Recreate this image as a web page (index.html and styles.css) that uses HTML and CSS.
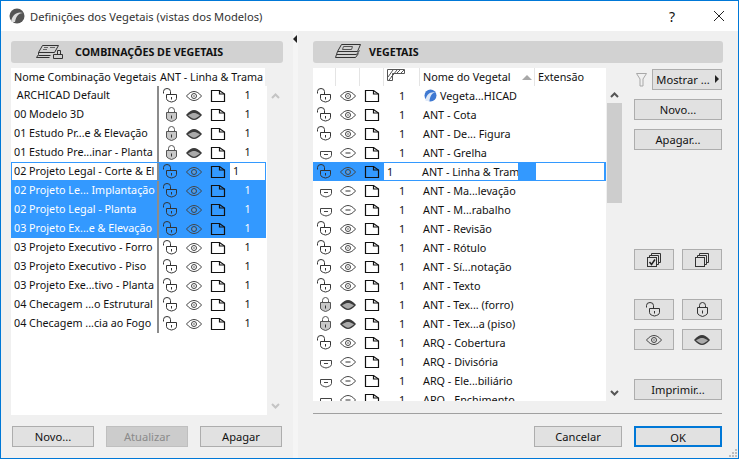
FILE: index.html
```html
<!DOCTYPE html>
<html lang="pt">
<head>
    <meta charset="UTF-8">
    <title>Definições dos Vegetais</title>
    <link rel="stylesheet" href="styles.css">
</head>
<body>
<svg class="defs" width="0" height="0">
    <symbol id="i-unlock" viewBox="0 0 16 16">
        <path d="M.5 5.500V3.500a3.500 3 0 0 1 7 0V6.500" fill="none" stroke="#333"/>
        <path d="M3.500 6.500h10v4c0 2-2.500 3-5 3.500-2.500-.5-5-1.500-5-3.500z" fill="none" stroke="#333"/>
        <path d="M8.500 9v2.500" stroke="#333"/>
    </symbol>
    <symbol id="i-lock" viewBox="0 0 16 16">
        <path d="M5.500 6V3.500a3 3 0 0 1 6 0V6" fill="none" stroke="#555"/>
        <path d="M3.500 5.500h10v5.500c0 1.800-3 2.800-5 3.500-2-.7-5-1.700-5-3.500z" fill="#c8c8c8" stroke="#555"/>
        <path d="M8.500 8.500v3" stroke="#333"/>
    </symbol>
    <symbol id="i-lock-line" viewBox="0 0 16 16">
        <path d="M5.500 6V3.500a3 3 0 0 1 6 0V6" fill="none" stroke="#333"/>
        <path d="M3.500 5.500h10v5.500c0 1.800-3 2.800-5 3.500-2-.7-5-1.700-5-3.500z" fill="none" stroke="#333"/>
        <path d="M8.500 8.500v3" stroke="#333"/>
    </symbol>
    <symbol id="i-half" viewBox="0 0 16 16">
        <path d="M3.500 6.500h11v4c0 2-3.500 3-5.500 3.500-2-.5-5.500-1.500-5.500-3.500z" fill="none" stroke="#444"/>
        <path d="M7 9.500h4" stroke="#444"/>
    </symbol>
    <symbol id="i-eye" viewBox="0 0 16 16">
        <path d="M.5 8C3 5 5.500 3.500 8 3.500s5 1.500 7.500 4.500C13 11 10.500 12.500 8 12.500S3 11 .5 8z" fill="none" stroke="#444"/>
        <circle cx="8" cy="8" r="2.500" fill="none" stroke="#444"/>
        <circle cx="8" cy="8" r="1" fill="#999"/>
    </symbol>
    <symbol id="i-eye-off" viewBox="0 0 16 16">
        <path d="M0 8C3 4.500 5.500 3 8 3s5 1.500 8 5c-3 3.500-5.500 5-8 5s-5-1.500-8-5z" fill="#3a3a3a"/>
        <path d="M2 8.300C5 6.500 6.500 6 8 6s3 .5 6 2.300c-2.500 2-4.500 3.400-6 3.400S4.500 10.300 2 8.300z" fill="#aaa"/>
    </symbol>
    <symbol id="i-eye-half" viewBox="0 0 16 16">
        <path d="M.5 8C3 5 5.500 3.500 8 3.500s5 1.500 7.500 4.500C13 11 10.500 12.500 8 12.500S3 11 .5 8z" fill="none" stroke="#444"/>
        <path d="M5.500 8h5" stroke="#333"/>
    </symbol>
    <symbol id="i-page" viewBox="0 0 16 16">
        <path d="M1.500 13.500V2.500h8l5 3.500v7.500z" fill="none" stroke="#111" stroke-width="1.200"/>
        <path d="M9.500 2.500v3.500h5" fill="none" stroke="#111" stroke-width="1.200"/>
    </symbol>
    <symbol id="i-stack" viewBox="0 0 16 16">
        <path d="M5.500 3.500v-2h9v9h-2M3.500 5.500v-2h9v9h-2" fill="none" stroke="#333"/>
        <rect x="1.500" y="5.500" width="9" height="9" fill="none" stroke="#333"/>
    </symbol>
</svg>
<div class="dialog">
    <div class="titlebar">
        <svg class="app-icon" width="16" height="16" viewBox="0 0 16 16">
            <circle cx="8" cy="8" r="7.500" fill="#555"/>
            <path d="M2 14C3 7 8 3 14 5c-4 0-7 3-8 9z" fill="#ddd"/>
        </svg>
        <span class="title">Definições dos Vegetais (vistas dos Modelos)</span>
        <span class="help">?</span>
        <svg class="close" width="12" height="12" viewBox="0 0 12 12"><path d="M1 1l10 10M11 1L1 11" stroke="#222" fill="none"/></svg>
    </div>
    <div class="content">
        <div class="left">
            <div class="bar">
                <svg class="bar-icon-l" width="28" height="16" viewBox="0 0 28 16">
                    <path d="M6.500 1.500h16l-4 7h-16zM2.500 8.500v2l-2 3h13M2.500 11.500h12" fill="none" stroke="#333"/>
                    <path d="M8 3.500h4M7 5.500h4M14 3.500h5" stroke="#666"/>
                    <path d="M17.500 10.500h9v4h-9zM21.500 6.500h3v4h-3z" fill="none" stroke="#333"/>
                </svg>
                <span class="bar-label">COMBINAÇÕES DE VEGETAIS</span>
            </div>
            <div class="thead">
                <span class="th-name">Nome Combinação Vegetais</span>
                <span class="th-ant">ANT - Linha &amp; Trama</span>
            </div>
            <div class="left-body">
                <div class="left-list">
                    <div class="row"><span class="name">&nbsp;ARCHICAD Default</span><span class="ic"><svg><use href="#i-unlock"/></svg></span><span class="ic"><svg><use href="#i-eye"/></svg></span><span class="ic"><svg><use href="#i-page"/></svg></span><span class="num">1</span></div>
                    <div class="row"><span class="name">00 Modelo 3D</span><span class="ic"><svg><use href="#i-lock"/></svg></span><span class="ic"><svg><use href="#i-eye-off"/></svg></span><span class="ic"><svg><use href="#i-page"/></svg></span><span class="num">1</span></div>
                    <div class="row"><span class="name">01 Estudo Pr...e &amp; Elevação</span><span class="ic"><svg><use href="#i-lock"/></svg></span><span class="ic"><svg><use href="#i-eye-off"/></svg></span><span class="ic"><svg><use href="#i-page"/></svg></span><span class="num">1</span></div>
                    <div class="row"><span class="name">01 Estudo Pre...inar - Planta</span><span class="ic"><svg><use href="#i-lock"/></svg></span><span class="ic"><svg><use href="#i-eye-off"/></svg></span><span class="ic"><svg><use href="#i-page"/></svg></span><span class="num">1</span></div>
                    <div class="row sel editing"><span class="name">02 Projeto Legal - Corte &amp; El</span><span class="ic"><svg><use href="#i-unlock"/></svg></span><span class="ic"><svg><use href="#i-eye"/></svg></span><span class="ic"><svg><use href="#i-page"/></svg></span><span class="num">1</span></div>
                    <div class="row sel"><span class="name">02 Projeto Le... Implantação</span><span class="ic"><svg><use href="#i-unlock"/></svg></span><span class="ic"><svg><use href="#i-eye"/></svg></span><span class="ic"><svg><use href="#i-page"/></svg></span><span class="num">1</span></div>
                    <div class="row sel"><span class="name">02 Projeto Legal - Planta</span><span class="ic"><svg><use href="#i-unlock"/></svg></span><span class="ic"><svg><use href="#i-eye"/></svg></span><span class="ic"><svg><use href="#i-page"/></svg></span><span class="num">1</span></div>
                    <div class="row sel"><span class="name">03 Projeto Ex...e &amp; Elevação</span><span class="ic"><svg><use href="#i-unlock"/></svg></span><span class="ic"><svg><use href="#i-eye"/></svg></span><span class="ic"><svg><use href="#i-page"/></svg></span><span class="num">1</span></div>
                    <div class="row"><span class="name">03 Projeto Executivo - Forro</span><span class="ic"><svg><use href="#i-unlock"/></svg></span><span class="ic"><svg><use href="#i-eye"/></svg></span><span class="ic"><svg><use href="#i-page"/></svg></span><span class="num">1</span></div>
                    <div class="row"><span class="name">03 Projeto Executivo - Piso</span><span class="ic"><svg><use href="#i-unlock"/></svg></span><span class="ic"><svg><use href="#i-eye"/></svg></span><span class="ic"><svg><use href="#i-page"/></svg></span><span class="num">1</span></div>
                    <div class="row"><span class="name">03 Projeto Exe...tivo - Planta</span><span class="ic"><svg><use href="#i-unlock"/></svg></span><span class="ic"><svg><use href="#i-eye"/></svg></span><span class="ic"><svg><use href="#i-page"/></svg></span><span class="num">1</span></div>
                    <div class="row"><span class="name">04 Checagem ...o Estrutural</span><span class="ic"><svg><use href="#i-unlock"/></svg></span><span class="ic"><svg><use href="#i-eye"/></svg></span><span class="ic"><svg><use href="#i-page"/></svg></span><span class="num">1</span></div>
                    <div class="row"><span class="name">04 Checagem ...cia ao Fogo</span><span class="ic"><svg><use href="#i-unlock"/></svg></span><span class="ic"><svg><use href="#i-eye"/></svg></span><span class="ic"><svg><use href="#i-page"/></svg></span><span class="num">1</span></div>
                </div>
                <div class="scroll-left">
                    <svg class="chev" width="9" height="6" viewBox="0 0 9 6"><path d="M1 5l3.500-3.500L8 5" fill="none" stroke="#c4c4c4" stroke-width="2"/></svg>
                    <svg class="chev" width="9" height="6" viewBox="0 0 9 6"><path d="M1 1l3.500 3.500L8 1" fill="none" stroke="#c4c4c4" stroke-width="2"/></svg>
                </div>
            </div>
            <div class="left-buttons">
                <button class="btn">Novo...</button>
                <button class="btn off">Atualizar</button>
                <button class="btn">Apagar</button>
            </div>
        </div>
        <div class="splitter"><span class="tri"></span></div>
        <div class="right">
            <div class="bar">
                <svg class="bar-icon-r" width="26" height="18" viewBox="0 0 26 18">
                    <path d="M6.500 1.500h19l-3 7h-20zM2.500 8.500l-1 3h20l3-4M1.500 11.500l-1 3h20l3-4" fill="none" stroke="#333"/>
                    <path d="M8.500 3.500h9l-1 3h-9z" fill="none" stroke="#555"/>
                </svg>
                <span class="bar-label">VEGETAIS</span>
            </div>
            <div class="right-mid">
                <div class="table">
                    <div class="thead-r">
                        <span class="h h1"></span><span class="h h1b"></span><span class="h h1b"></span>
                        <span class="h h2"><svg width="18" height="12" viewBox="0 0 18 12"><path d="M.5 11.500V.5h17v4H5.500v7z" fill="#fff" stroke="#555"/><path d="M1 8l5-7M2 11l8-10M10 4l3-3M14 4l3-3M4 8l3-3" stroke="#555"/></svg></span>
                        <span class="h h3">Nome do Vegetal<span class="sort"></span></span>
                        <span class="h h4">Extensão</span>
                    </div>
                    <div class="right-list">
                        <div class="rrow"><span class="ic"><svg><use href="#i-unlock"/></svg></span><span class="ic"><svg><use href="#i-eye"/></svg></span><span class="ic"><svg><use href="#i-page"/></svg></span><span class="rnum">1</span><span class="rname"><svg class="ac" width="13" height="13" viewBox="0 0 13 13"><circle cx="6.500" cy="6.500" r="6" fill="#3f79d2"/><path d="M1.500 12C2 6 6 2.500 11 3.500 8 4 6 7 5.500 12z" fill="#dfe9f8"/></svg>Vegeta...HICAD</span></div>
                        <div class="rrow"><span class="ic"><svg><use href="#i-unlock"/></svg></span><span class="ic"><svg><use href="#i-eye"/></svg></span><span class="ic"><svg><use href="#i-page"/></svg></span><span class="rnum">1</span><span class="rname">ANT - Cota</span></div>
                        <div class="rrow"><span class="ic"><svg><use href="#i-unlock"/></svg></span><span class="ic"><svg><use href="#i-eye"/></svg></span><span class="ic"><svg><use href="#i-page"/></svg></span><span class="rnum">1</span><span class="rname">ANT - De... Figura</span></div>
                        <div class="rrow"><span class="ic"><svg><use href="#i-half"/></svg></span><span class="ic"><svg><use href="#i-eye-half"/></svg></span><span class="ic"><svg><use href="#i-page"/></svg></span><span class="rnum">1</span><span class="rname">ANT - Grelha</span></div>
                        <div class="rrow current"><span class="ic"><svg><use href="#i-unlock"/></svg></span><span class="ic"><svg><use href="#i-eye"/></svg></span><span class="ic"><svg><use href="#i-page"/></svg></span><span class="rnum">1</span><span class="rname">ANT - Linha &amp; Tram</span><span class="rgap"></span><span class="rext"></span></div>
                        <div class="rrow"><span class="ic"><svg><use href="#i-half"/></svg></span><span class="ic"><svg><use href="#i-eye-half"/></svg></span><span class="ic"><svg><use href="#i-page"/></svg></span><span class="rnum">1</span><span class="rname">ANT - Ma...levação</span></div>
                        <div class="rrow"><span class="ic"><svg><use href="#i-half"/></svg></span><span class="ic"><svg><use href="#i-eye-half"/></svg></span><span class="ic"><svg><use href="#i-page"/></svg></span><span class="rnum">1</span><span class="rname">ANT - M...rabalho</span></div>
                        <div class="rrow"><span class="ic"><svg><use href="#i-unlock"/></svg></span><span class="ic"><svg><use href="#i-eye"/></svg></span><span class="ic"><svg><use href="#i-page"/></svg></span><span class="rnum">1</span><span class="rname">ANT - Revisão</span></div>
                        <div class="rrow"><span class="ic"><svg><use href="#i-unlock"/></svg></span><span class="ic"><svg><use href="#i-eye"/></svg></span><span class="ic"><svg><use href="#i-page"/></svg></span><span class="rnum">1</span><span class="rname">ANT - Rótulo</span></div>
                        <div class="rrow"><span class="ic"><svg><use href="#i-unlock"/></svg></span><span class="ic"><svg><use href="#i-eye"/></svg></span><span class="ic"><svg><use href="#i-page"/></svg></span><span class="rnum">1</span><span class="rname">ANT - Sí...notação</span></div>
                        <div class="rrow"><span class="ic"><svg><use href="#i-unlock"/></svg></span><span class="ic"><svg><use href="#i-eye"/></svg></span><span class="ic"><svg><use href="#i-page"/></svg></span><span class="rnum">1</span><span class="rname">ANT - Texto</span></div>
                        <div class="rrow"><span class="ic"><svg><use href="#i-lock"/></svg></span><span class="ic"><svg><use href="#i-eye-off"/></svg></span><span class="ic"><svg><use href="#i-page"/></svg></span><span class="rnum">1</span><span class="rname">ANT - Tex... (forro)</span></div>
                        <div class="rrow"><span class="ic"><svg><use href="#i-lock"/></svg></span><span class="ic"><svg><use href="#i-eye-off"/></svg></span><span class="ic"><svg><use href="#i-page"/></svg></span><span class="rnum">1</span><span class="rname">ANT - Tex...a (piso)</span></div>
                        <div class="rrow"><span class="ic"><svg><use href="#i-unlock"/></svg></span><span class="ic"><svg><use href="#i-eye"/></svg></span><span class="ic"><svg><use href="#i-page"/></svg></span><span class="rnum">1</span><span class="rname">ARQ - Cobertura</span></div>
                        <div class="rrow"><span class="ic"><svg><use href="#i-half"/></svg></span><span class="ic"><svg><use href="#i-eye-half"/></svg></span><span class="ic"><svg><use href="#i-page"/></svg></span><span class="rnum">1</span><span class="rname">ARQ - Divisória</span></div>
                        <div class="rrow"><span class="ic"><svg><use href="#i-half"/></svg></span><span class="ic"><svg><use href="#i-eye-half"/></svg></span><span class="ic"><svg><use href="#i-page"/></svg></span><span class="rnum">1</span><span class="rname">ARQ - Ele...biliário</span></div>
                        <div class="rrow"><span class="ic"><svg><use href="#i-half"/></svg></span><span class="ic"><svg><use href="#i-eye-half"/></svg></span><span class="ic"><svg><use href="#i-page"/></svg></span><span class="rnum">1</span><span class="rname">ARQ - Enchimento</span></div>
                    </div>
                </div>
                <div class="scroll-right">
                    <svg class="chev" width="9" height="6" viewBox="0 0 9 6"><path d="M1 5l3.500-3.500L8 5" fill="none" stroke="#555" stroke-width="2"/></svg>
                    <div class="thumb"></div>
                    <svg class="chev" width="9" height="6" viewBox="0 0 9 6"><path d="M1 1l3.500 3.500L8 1" fill="none" stroke="#555" stroke-width="2"/></svg>
                </div>
                <div class="side">
                    <div class="filter-row">
                        <svg width="11" height="15" viewBox="0 0 11 15"><path d="M.5 1.500h10L7 7v7H4V7z" fill="none" stroke="#a8a8a8"/></svg>
                        <button class="btn show">Mostrar ...<span class="tri-r"></span></button>
                    </div>
                    <button class="btn wide">Novo...</button>
                    <button class="btn wide">Apagar...</button>
                    <div class="pair pair-top">
                        <button class="btn small"><svg width="16" height="16" viewBox="0 0 16 16"><path d="M5.500 3.500v-2h9v9h-2M3.500 5.500v-2h9v9h-2" fill="none" stroke="#333"/><rect x="1.500" y="5.500" width="9" height="9" fill="none" stroke="#333"/><path d="M3.500 10l2 2.500 3.500-5" fill="none" stroke="#222" stroke-width="1.500"/></svg></button>
                        <button class="btn small"><svg><use href="#i-stack"/></svg></button>
                    </div>
                    <div class="pair pair-lock">
                        <button class="btn small"><svg><use href="#i-unlock"/></svg></button>
                        <button class="btn small"><svg><use href="#i-lock-line"/></svg></button>
                    </div>
                    <div class="pair">
                        <button class="btn small"><svg><use href="#i-eye"/></svg></button>
                        <button class="btn small"><svg><use href="#i-eye-off"/></svg></button>
                    </div>
                    <button class="btn wide print">Imprimir...</button>
                </div>
            </div>
            <div class="sep"></div>
            <div class="footer">
                <button class="btn">Cancelar</button>
                <button class="btn ok">OK</button>
            </div>
        </div>
    </div>
    <svg class="grip" width="9" height="9" viewBox="0 0 9 9"><path d="M6 0h2v2H6zM3 3h2v2H3zM6 3h2v2H6zM0 6h2v2H0zM3 6h2v2H3zM6 6h2v2H6z" fill="#bdbdbd"/></svg>
</div>
</body>
</html>
```

FILE: styles.css
```css
html,body{
    margin: 0;
    padding: 0;
    background: #f0f0f0;
    color: #111;
    font: 11.150px/19px "Noto Sans",sans-serif;
}
.defs{
    position: absolute;
}
.dialog{
    position: relative;
    width: 739px;
    height: 459px;
    box-sizing: border-box;
    border: 1px solid #0078d7;
    overflow: hidden;
}
.titlebar{
    display: flex;
    align-items: center;
    height: 30px;
    background: #fff;
    padding-left: 8px;
}
.title{
    margin-left: 5px;
    flex: 1;
    color: #333;
}
.help{
    font-size: 14px;
    margin-right: 38px;
}
.close{
    margin-right: 13px;
}
.content{
    display: flex;
    height: 427px;
}
.left{
    width: 272px;
    margin-left: 10px;
    padding-top: 10px;
}
.bar{
    display: flex;
    align-items: center;
    height: 22px;
    background: #d2d2d2;
    border-radius: 3px;
}
.bar-label{
    font-weight: bold;
    font-size: 10.700px;
    color: #111;
}
.bar-icon-l{
    margin: 0 11px 0 25px;
}
.bar-icon-r{
    margin: 0 8px 0 22px;
}
.thead{
    display: flex;
    width: 254px;
    height: 18px;
    margin-top: 5px;
    background: #fff;
    line-height: 18px;
    font-size: 10.750px;
}
.th-name{
    width: 148px;
    padding-left: 3px;
    box-sizing: border-box;
    overflow: hidden;
    white-space: nowrap;
}
.th-ant{
    padding-left: 1px;
    white-space: nowrap;
}
.left-body{
    display: flex;
    height: 329px;
}
.left-list{
    width: 256px;
    background: #fff;
    font-size: 10.750px;
}
.scroll-left{
    display: flex;
    flex-direction: column;
    justify-content: space-between;
    align-items: center;
    flex: 1;
    padding: 7px 0 6px;
    box-sizing: border-box;
}
.row,.rrow{
    display: flex;
    height: 19px;
    white-space: nowrap;
}
.name{
    width: 148px;
    padding-left: 3px;
    box-sizing: border-box;
    overflow: hidden;
    border-right: 2px solid #8c8c8c;
    flex: none;
}
.ic{
    display: flex;
    align-items: center;
    justify-content: center;
    width: 24px;
    flex: none;
}
.ic svg,.btn svg{
    width: 16px;
    height: 16px;
}
.name + .ic{
    width: 23px;
}
.num{
    width: 35px;
    text-align: center;
}
.row.sel{
    background: #3399ff;
    width: 255px;
}
.row.sel .name{
    color: #fff;
}
.row.sel .num{
    color: #fff;
}
.row.editing{
    outline: 1px solid #3399ff;
    outline-offset: -1px;
    background: #fff;
}
.row.editing .ic{
    background: #3399ff;
}
.row.editing .name{
    color: #111;
}
.row.editing .num{
    color: #111;
    text-align: left;
    padding-left: 3px;
    box-sizing: border-box;
}
.left-buttons{
    display: flex;
    justify-content: space-between;
    margin: 11px 1px 0 1px;
}
.btn{
    height: 21px;
    padding: 0;
    background: #e1e1e1;
    border: 1px solid #adadad;
    font: 11.150px/19px "Noto Sans",sans-serif;
    color: #111;
    display: block;
}
.left-buttons .btn{
    width: 82px;
}
.footer .btn{
    width: 88px;
}
.btn.off{
    background: #cccccc;
    border-color: #bfbfbf;
    color: #8a8a8a;
}
.splitter{
    width: 30px;
    flex: none;
    position: relative;
}
.splitter::after{
    content: "";
    display: block;
    width: 5px;
    height: 100%;
    margin-left: 10px;
    background: #f5f5f5;
}
.tri{
    position: absolute;
    top: 4px;
    left: 10px;
    border: 4px solid transparent;
    border-left: 0;
    border-right: 4px solid #222;
    z-index: 1;
}
.right{
    width: 410px;
    padding-top: 10px;
}
.right-mid{
    display: flex;
    height: 333px;
    margin-top: 5px;
}
.table{
    width: 293px;
    font-size: 10.800px;
}
.thead-r{
    display: flex;
    height: 18px;
    line-height: 18px;
}
.h{
    background: #fff;
    box-sizing: border-box;
    border-right: 1px solid #e4e4e4;
    white-space: nowrap;
}
.h1,.h1b{
    width: 24px;
}
.h1{
    width: 23px;
}
.h2{
    width: 36px;
    padding-left: 3px;
}
.h3{
    width: 115px;
    padding-left: 3px;
    position: relative;
}
.h4{
    width: 71px;
    padding-left: 3px;
    border-right: 0;
}
.sort{
    position: absolute;
    right: 2px;
    top: 7px;
    border: 5px solid transparent;
    border-top: 0;
    border-bottom: 5px solid #a8a8a8;
}
.right-list{
    height: 315px;
    background: #fff;
    overflow: hidden;
}
.rrow .ic:first-child{
    width: 23px;
}
.rnum{
    width: 36px;
    text-align: center;
    flex: none;
}
.rname{
    padding-left: 3px;
    display: flex;
    align-items: center;
}
.ac{
    margin: 0 3px 0 1px;
}
.rrow.current{
    background: #3399ff;
    padding: 1px 0;
    box-sizing: border-box;
}
.rrow.current .ic{
    margin-top: -1px;
    height: 19px;
}
.rrow.current .rnum{
    background: #fff;
    text-align: left;
    padding-left: 3px;
    box-sizing: border-box;
    line-height: 17px;
}
.rrow.current .rname{
    width: 98px;
    flex: none;
    background: #fff;
    box-sizing: border-box;
    padding-left: 2px;
    overflow: hidden;
}
.rgap{
    width: 18px;
    flex: none;
}
.rext{
    width: 68px;
    background: #fff;
}
.scroll-right{
    display: flex;
    flex-direction: column;
    align-items: center;
    width: 15px;
    height: 333px;
    margin-left: 1px;
    padding-top: 24px;
    box-sizing: border-box;
}
.thumb{
    width: 15px;
    height: 100px;
    margin-top: 5px;
    background: #cdcdcd;
}
.scroll-right .chev:last-child{
    margin-top: auto;
    margin-bottom: 5px;
}
.side{
    width: 88px;
    margin-left: 12px;
    padding-top: 1px;
}
.filter-row{
    display: flex;
    align-items: center;
    justify-content: space-between;
    padding-left: 2px;
}
.show{
    width: 70px;
    position: relative;
    padding-right: 8px;
}
.tri-r{
    position: absolute;
    right: 2px;
    top: 5px;
    border: 4px solid transparent;
    border-right: 0;
    border-left: 4px solid #222;
}
.wide{
    width: 88px;
    margin-top: 9px;
}
.pair{
    display: flex;
    justify-content: space-between;
    margin-top: 9px;
}
.pair-top{
    margin-top: 99px;
}
.pair-lock{
    margin-top: 29px;
}
.small{
    width: 40px;
    display: flex;
    align-items: center;
    justify-content: center;
}
.print{
    margin-top: 29px;
}
.sep{
    height: 1px;
    margin-top: 12px;
    background: #a0a0a0;
    margin-right: 1px;
}
.footer{
    display: flex;
    justify-content: flex-end;
    gap: 12px;
    margin-top: 12px;
    padding-right: 1px;
}
.ok{
    border: 2px solid #0078d7;
}
.grip{
    position: absolute;
    right: 0;
    bottom: 0;
}
```
